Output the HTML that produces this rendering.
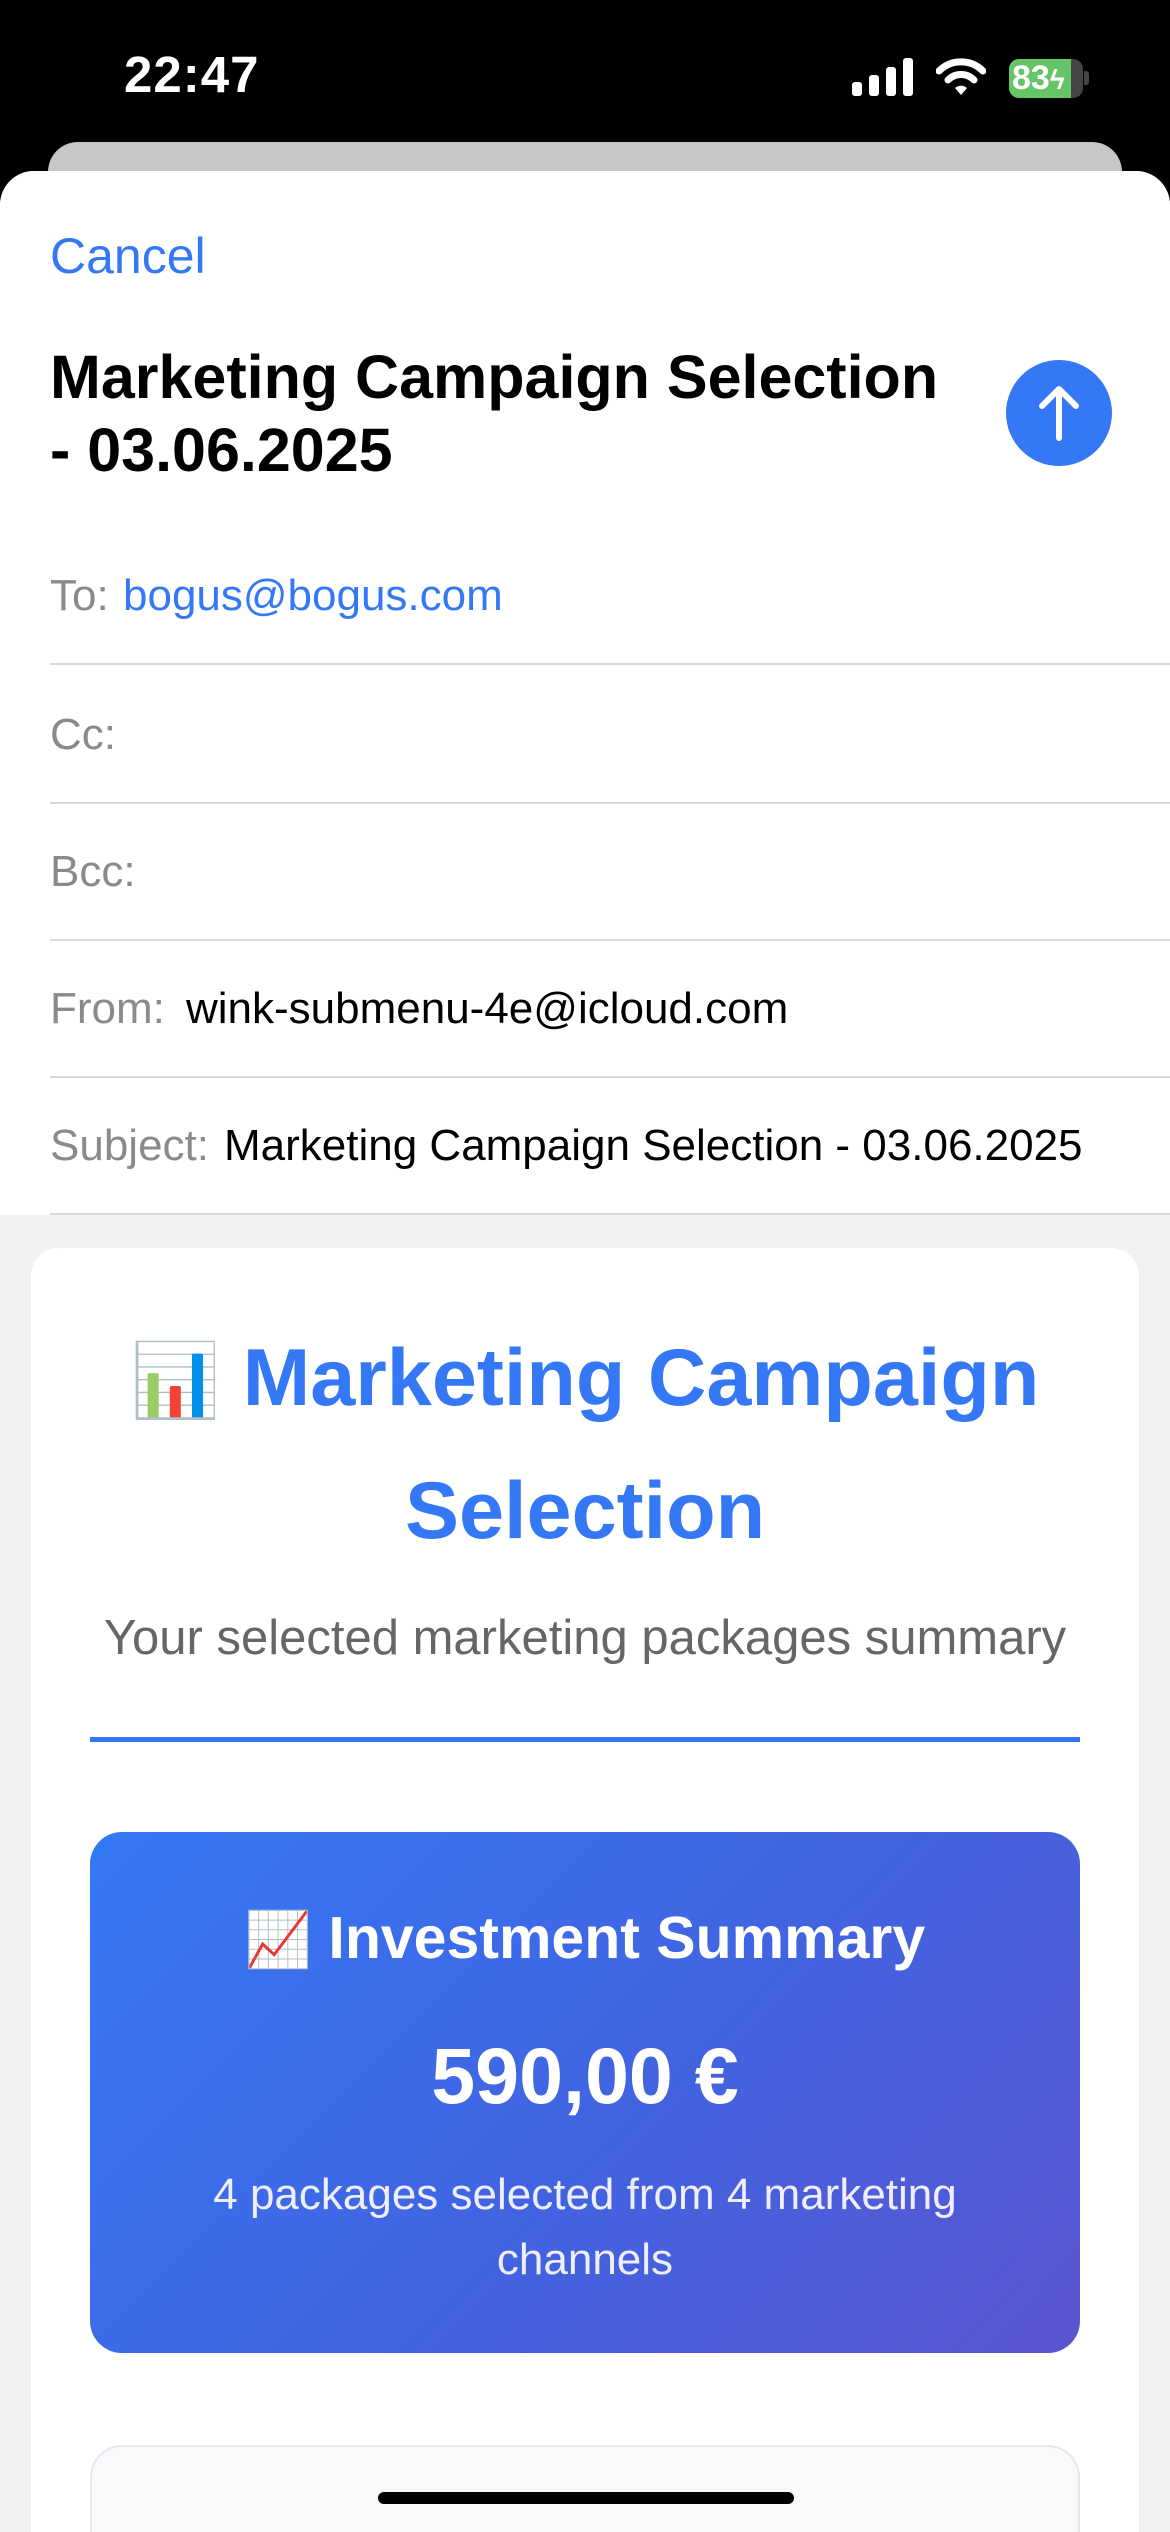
<!DOCTYPE html>
<html><head><meta charset="utf-8"><style>
*{margin:0;padding:0;box-sizing:border-box}
html,body{width:1170px;height:2532px;overflow:hidden;background:#000;font-family:"Liberation Sans",Arial,sans-serif}
.abs{position:absolute}
.time{left:124px;top:45px;font-size:51px;font-weight:bold;color:#fff;letter-spacing:1px}
.gray{left:48px;top:142px;width:1074px;height:80px;background:#c6c7c8;border-radius:30px 30px 0 0}
.sheet{left:0;top:171px;width:1170px;height:2361px;background:#f2f2f4;border-radius:34px 34px 0 0;overflow:hidden}
.head{position:absolute;left:0;top:0;width:1170px;height:1044px;background:#fff}
.cancel{left:50px;top:56px;font-size:50px;color:#3478f6}
.title{left:50px;top:170px;font-size:61px;font-weight:bold;line-height:73px;color:#000;width:920px}
.send{left:1006px;top:189px;width:106px;height:106px;border-radius:53px;background:#3478f6}
.row{position:absolute;left:50px;width:1120px;height:137px;border-bottom:2px solid #d8d8dc;font-size:44px;color:#8a8a8e}
.row span{position:absolute;top:50%;transform:translateY(-50%);white-space:nowrap}
.card{left:31px;top:1077px;width:1108px;height:1284px;background:#fff;border-radius:28px 28px 0 0;overflow:hidden}
.ct{position:absolute;left:0;width:1108px;text-align:center;white-space:nowrap}
</style></head><body>
<div class="abs time">22:47</div>
<svg class="abs" style="left:852px;top:58px" width="62" height="38"><rect x="0" y="24" width="10" height="14" rx="3" fill="#fff"/><rect x="17" y="17" width="10" height="21" rx="3" fill="#fff"/><rect x="34" y="9" width="10" height="29" rx="3" fill="#fff"/><rect x="51" y="0" width="10" height="38" rx="3" fill="#fff"/></svg>
<svg class="abs" style="left:936px;top:58px" width="50" height="38" viewBox="0 0 50 38"><path d="M3 13 A31 31 0 0 1 47 13" stroke="#fff" stroke-width="7" fill="none" stroke-linecap="round"/><path d="M12 22 A18 18 0 0 1 38 22" stroke="#fff" stroke-width="7" fill="none" stroke-linecap="round"/><path d="M19 30 L25 37 L31 30 A9 9 0 0 0 19 30Z" fill="#fff"/></svg>
<div class="abs" style="left:1009px;top:59px;width:74px;height:39px;border-radius:10px;background:#444"></div>
<div class="abs" style="left:1009px;top:59px;width:62px;height:39px;border-radius:10px 0 0 10px;background:#65c466;color:#fff;font-size:34px;font-weight:bold;line-height:39px;padding-left:3px">83<span style="font-size:28px">ϟ</span></div>
<div class="abs" style="left:1084px;top:71px;width:5px;height:14px;border-radius:0 3px 3px 0;background:#444"></div>
<div class="abs gray"></div>
<div class="abs sheet">
 <div class="head">
  <div class="abs cancel">Cancel</div>
  <div class="abs title">Marketing Campaign Selection - 03.06.2025</div>
  <div class="abs send"><svg width="106" height="106"><path d="M53 78 V30 M36 46 L53 29 L70 46" stroke="#fff" stroke-width="6" fill="none" stroke-linecap="round" stroke-linejoin="round"/></svg></div>
  <div class="row" style="top:357px"><span>To:</span><span style="left:73px;color:#3478f6">bogus@bogus.com</span></div>
  <div class="row" style="top:496px"><span>Cc:</span></div>
  <div class="row" style="top:633px"><span>Bcc:</span></div>
  <div class="row" style="top:770px"><span>From:</span><span style="left:136px;color:#000">wink-submenu-4e@icloud.com</span></div>
  <div class="row" style="top:907px"><span>Subject:</span><span style="left:174px;color:#000">Marketing Campaign Selection - 03.06.2025</span></div>
 </div>
 <div class="abs card">
  <div class="ct" style="top:65px;font-size:81px;font-weight:bold;color:#3478f6;line-height:130px">
   <span style="font-size:72px">📊</span> Marketing Campaign<br>Selection</div>
  <div class="ct" style="top:362px;font-size:49px;color:#666">Your selected marketing packages summary</div>
  <div class="abs" style="left:59px;top:489px;width:990px;height:5px;background:#3478f6"></div>
  <div class="abs" style="left:59px;top:584px;width:990px;height:521px;border-radius:32px;background:linear-gradient(135deg,#3478f6 0%,#4263e0 55%,#5b55d0 100%)">
   <div class="abs" style="left:0;width:990px;text-align:center;top:72px;font-size:59px;font-weight:bold;color:#fff;white-space:nowrap"><span style="font-size:54px">📈</span> Investment Summary</div>
   <div class="abs" style="left:0;width:990px;text-align:center;top:198px;font-size:79px;font-weight:bold;color:#fff">590,00 €</div>
   <div class="abs" style="left:60px;width:870px;text-align:center;top:330px;font-size:44px;line-height:65px;color:#eef">4 packages selected from 4 marketing channels</div>
  </div>
  <div class="abs" style="left:59px;top:1197px;width:990px;height:87px;border-radius:32px 32px 0 0;background:#f8f9fb;border:2px solid #e6e8ec;border-bottom:none"></div>
 </div>
</div>
<div class="abs" style="left:378px;top:2492px;width:416px;height:12px;border-radius:6px;background:#000"></div>
</body></html>
